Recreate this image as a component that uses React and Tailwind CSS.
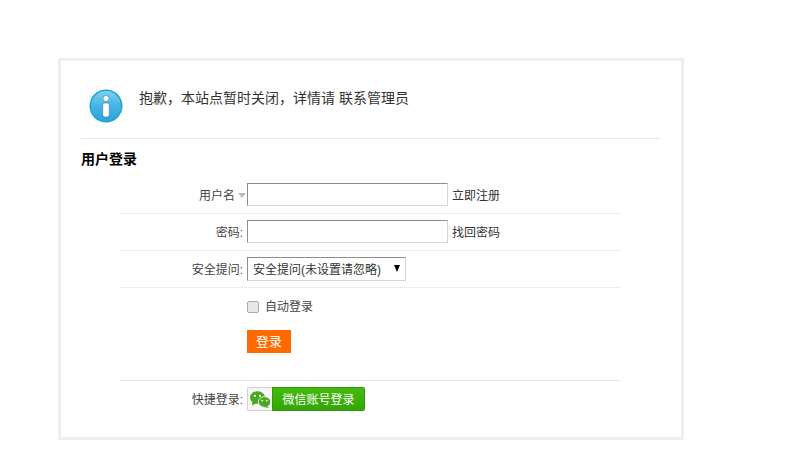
import React from 'react';

const font = { fontFamily: '"Liberation Sans", "Noto Sans CJK SC", sans-serif' };

function InfoIcon() {
  return (
    <svg width="34" height="34" viewBox="0 0 34 34" className="shrink-0">
      <defs>
        <linearGradient id="infoBg" x1="0" y1="0" x2="0" y2="1">
          <stop offset="0" stopColor="#7fd0ef" />
          <stop offset="0.5" stopColor="#45b4e3" />
          <stop offset="1" stopColor="#2ea3d9" />
        </linearGradient>
      </defs>
      <circle cx="17" cy="17" r="16.5" fill="#1fa2d6" />
      <circle cx="17" cy="17" r="15" fill="url(#infoBg)" />
      <circle cx="17" cy="9.5" r="3" fill="#fff" stroke="#2a7fa8" strokeWidth="0.6" />
      <rect x="13.7" y="14" width="6.6" height="14" rx="2.2" fill="#fff" stroke="#2a7fa8" strokeWidth="0.6" />
    </svg>
  );
}

function WechatIcon() {
  return (
    <svg width="21" height="17" viewBox="0 0 21 17">
      <ellipse cx="7.5" cy="6.5" rx="7.5" ry="6.3" fill="#48a81f" />
      <path d="M2.5 10 L2 14.5 L7 12 Z" fill="#48a81f" />
      <circle cx="5" cy="4.8" r="1.1" fill="#fff" />
      <circle cx="10" cy="4.8" r="1.1" fill="#fff" />
      <ellipse cx="14.5" cy="11" rx="6.2" ry="5.3" fill="#48a81f" stroke="#f5f5f5" strokeWidth="0.8" />
      <path d="M17 15 L19 17 L14 16 Z" fill="#48a81f" />
      <circle cx="12.3" cy="9.6" r="0.95" fill="#fff" />
      <circle cx="16.7" cy="9.6" r="0.95" fill="#fff" />
    </svg>
  );
}

function Row({ label, children }) {
  return (
    <div className="flex h-[37px] items-start border-b border-dotted border-[#ddd] pt-[6px]">
      <div className="flex h-[23px] w-[123px] items-center justify-end pt-[2px] text-xs text-[#444]">{label}</div>
      <div className="ml-[4px] flex items-center">{children}</div>
    </div>
  );
}

function TextInput() {
  return <input className="h-[23px] w-[201px] border border-[#d5d5d5] border-t-[#8c8c8c] border-l-[#8c8c8c] bg-white" />;
}

export default function App() {
  return (
    <div className="min-h-[456px] bg-white pl-[58px] pt-[58px] text-[#333]" style={font}>
      <div className="h-[382px] w-[626px] border-[3px] border-[#eeeeee] bg-white px-[20px]">
        {/* message */}
        <div className="flex h-[78px] border-b border-[#e6e6e6] pl-[8px] pt-[28px]">
          <InfoIcon />
          <p className="ml-[16px] text-sm leading-[18px] text-[#333]">抱歉，本站点暂时关闭，详情请 联系管理员</p>
        </div>

        <h3 className="mt-[11px] h-[20px] text-sm leading-[18px] font-bold text-black">用户登录</h3>

        <div className="ml-[39px] mt-[7px] w-[501px]">
          <Row
            label={
              <>
                用户名
                <span className="-mr-[3px] ml-[3px] h-0 w-0 border-x-[4px] border-t-[5px] border-x-transparent border-t-[#bbb]" />
              </>
            }
          >
            <TextInput />
            <a className="ml-[4px] pt-[2px] text-xs text-[#333]">立即注册</a>
          </Row>
          <Row label="密码:">
            <TextInput />
            <a className="ml-[4px] pt-[2px] text-xs text-[#333]">找回密码</a>
          </Row>
          <Row label="安全提问:">
            <div className="flex h-[24px] w-[159px] items-center justify-between border border-[#d5d5d5] border-t-[#8c8c8c] border-l-[#8c8c8c] bg-white pl-[5px] pr-[5px] pt-[2px] text-xs text-[#333]">
              <span>安全提问(未设置请忽略)</span>
              <span className="mb-[4px] h-0 w-0 border-x-[3.5px] border-t-[7px] border-x-transparent border-t-black" />
            </div>
          </Row>

          <div className="ml-[127px] mt-[11px] flex items-center">
            <span className="h-[12px] w-[12px] rounded-[2px] border border-[#aaa] bg-[#e8e8e8]" />
            <span className="ml-[6px] text-xs text-[#444]">自动登录</span>
          </div>

          <button className="ml-[127px] mt-[15px] block h-[23px] w-[44px] bg-[#ff6a00] text-[13px] text-white">登录</button>

          <div className="mt-[27px] flex items-start border-t border-[#e6e6e6] pt-[6px]">
            <div className="flex h-[24px] w-[123px] items-center justify-end pt-[2px] text-xs text-[#444]">快捷登录:</div>
            <a className="ml-[4px] flex h-[24px] w-[118px] overflow-hidden rounded-[2px]">
              <span className="flex w-[25px] shrink-0 items-center justify-center border border-r-0 border-[#d0d0d0] bg-[#f5f5f5]">
                <WechatIcon />
              </span>
              <span className="flex flex-1 items-center justify-center border border-[#2f9c05] bg-gradient-to-b from-[#45bb10] to-[#33a606] pt-[2px] text-xs text-white">微信账号登录</span>
            </a>
          </div>
        </div>
      </div>
    </div>
  );
}
